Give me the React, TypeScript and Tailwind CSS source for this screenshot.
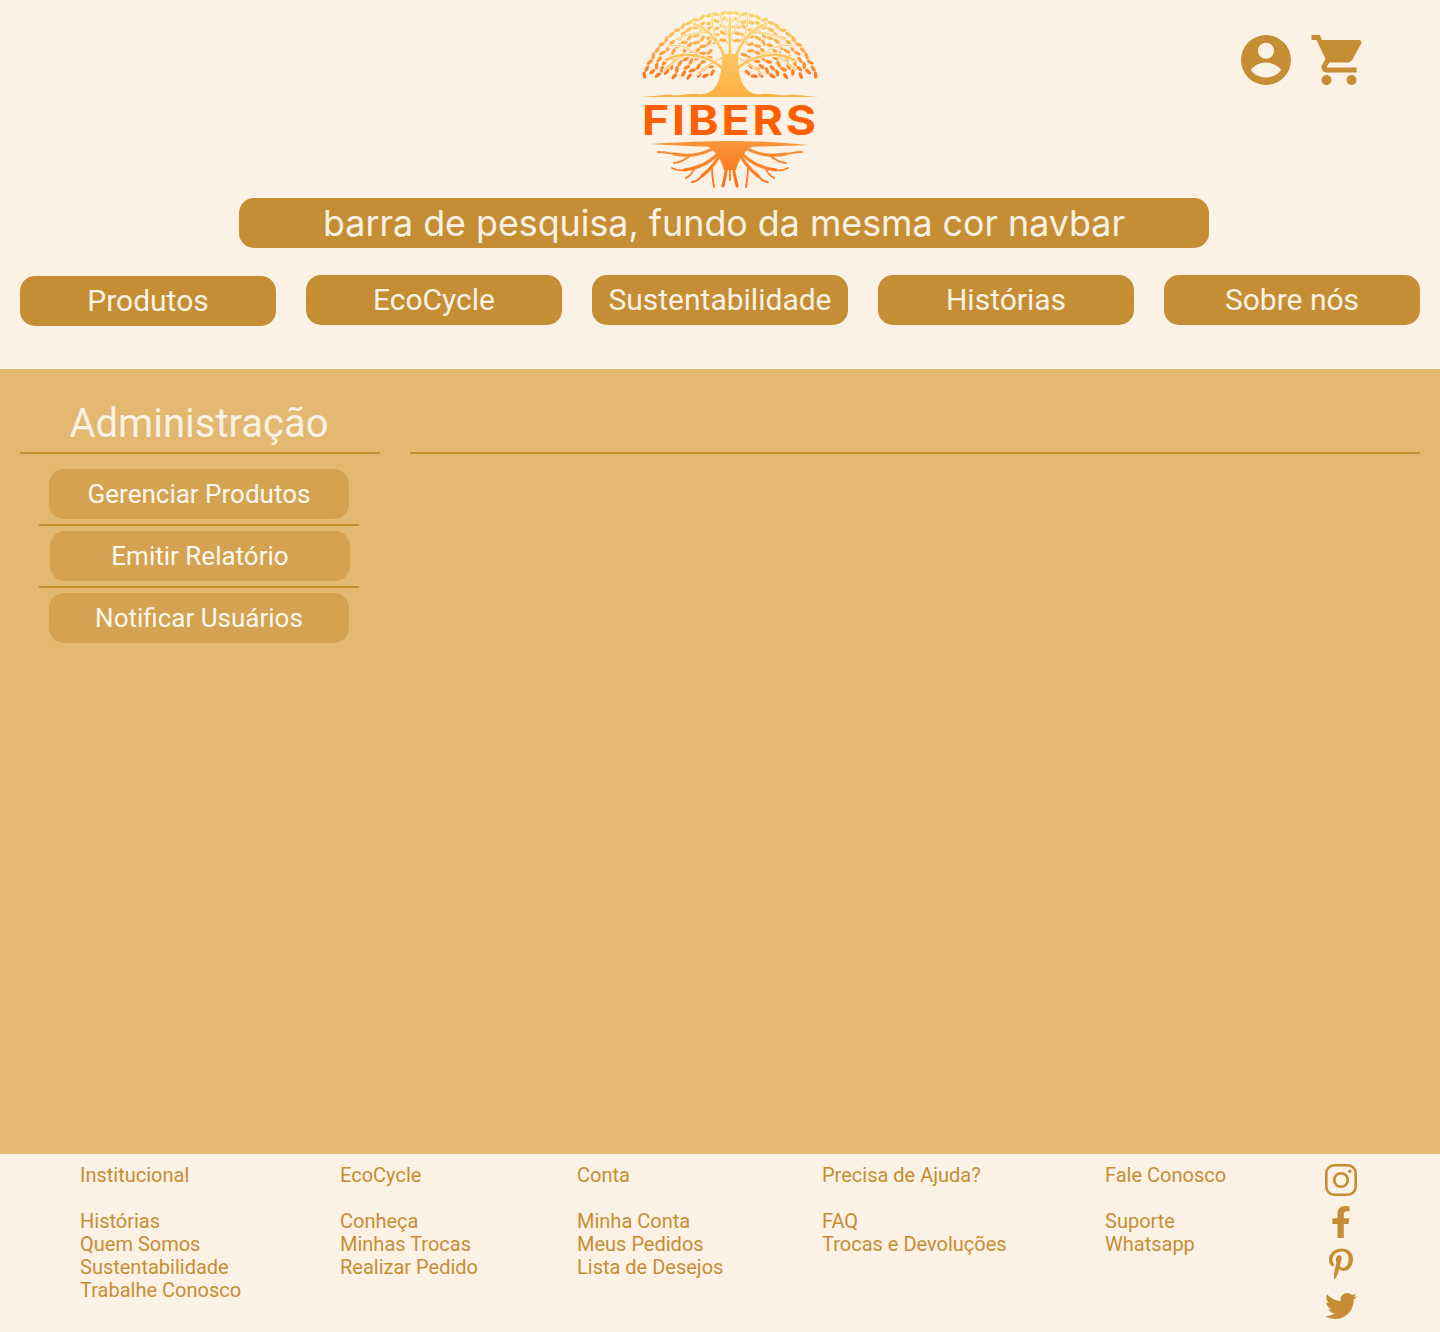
import React from "react";
import { FaFacebookF, FaPinterestP, FaTwitter } from "react-icons/fa";

const leaves: { x: number; y: number; a: number }[] = [];
const cx = 110, cy = 103;
let ringIndex = 0;
for (let r = 90; r >= 28; r -= 6.8) {
  const n = Math.floor((Math.PI * r) / 7);
  for (let i = 0; i <= n; i++) {
    const t = (Math.PI * (i + (ringIndex % 2) * 0.5)) / n;
    const jitter = ringIndex === 0 ? 0 : ((i * 13 + ringIndex * 7) % 5) - 2;
    const rr = r + jitter * 0.5;
    const x = cx + rr * Math.cos(t);
    const y = cy - rr * Math.sin(t);
    if (y > 78 || (Math.abs(x - 110) < 14 && y > 46)) continue;
    const tilt = ((i * 47 + ringIndex * 29) % 70) - 35;
    const a = (-t * 180) / Math.PI + 90 + tilt;
    leaves.push({ x, y, a });
  }
  ringIndex++;
}

const thickBranches = [
  "M108 66C104 52 98 42 90 34C85 29 80 26 74 24",
  "M112 66C116 52 122 42 130 34C135 29 140 26 146 24",
  "M104 70C96 62 84 56 70 55C62 54 54 56 46 60",
  "M116 70C124 62 136 56 150 55C158 54 166 56 174 60",
  "M110 62C110 48 109 34 110 18",
];
const thinBranches = [
  "M98 44C94 34 92 26 92 16",
  "M122 44C126 34 128 26 128 16",
  "M88 33C78 32 66 34 56 40",
  "M132 33C142 32 154 34 164 40",
  "M78 55C70 48 60 44 48 46",
  "M142 55C150 48 160 44 172 46",
  "M64 55C56 60 50 64 44 70",
  "M156 55C164 60 170 64 176 70",
  "M102 58C92 62 84 68 78 74",
  "M118 58C128 62 136 68 142 74",
  "M110 36C104 30 102 24 100 14",
  "M110 36C116 30 118 24 120 14",
];
const thickRoots = [
  "M104 148C98 160 92 168 82 176",
  "M116 148C122 160 128 168 138 176",
  "M96 147C84 154 72 157 54 154",
  "M124 147C136 154 148 157 166 154",
  "M101 150C92 162 80 168 64 170",
  "M119 150C128 162 140 168 156 170",
  "M108 150C108 164 106 174 103 186",
  "M112 150C112 164 114 174 117 186",
];
const thinRoots = [
  "M54 154C48 153 44 152 38 152",
  "M166 154C172 153 176 152 182 152",
  "M70 156C64 160 60 163 54 163",
  "M150 156C156 160 160 163 166 163",
  "M82 176C78 180 76 182 72 182",
  "M138 176C142 180 144 182 148 182",
  "M92 168C92 176 93 181 94 187",
  "M128 168C128 176 127 181 126 187",
  "M74 169C72 174 70 176 66 178",
  "M146 169C148 174 150 176 154 178",
  "M64 170C60 171 56 170 52 168",
  "M156 170C160 171 164 170 168 168",
  "M110 156C110 166 110 172 110 180",
];

function Logo() {
  return (
    <svg width="220" height="195" viewBox="0 0 220 195" className="block shrink-0">
      <defs>
        <linearGradient id="lf" x1="0" y1="12" x2="0" y2="78" gradientUnits="userSpaceOnUse">
          <stop offset="0" stopColor="#FBD768" />
          <stop offset="0.5" stopColor="#FBAE4C" />
          <stop offset="1" stopColor="#FF741C" />
        </linearGradient>
        <linearGradient id="tr" x1="0" y1="16" x2="0" y2="96" gradientUnits="userSpaceOnUse">
          <stop offset="0" stopColor="#FBDA78" />
          <stop offset="1" stopColor="#FDB044" />
        </linearGradient>
        <linearGradient id="rt" x1="0" y1="142" x2="0" y2="188" gradientUnits="userSpaceOnUse">
          <stop offset="0" stopColor="#F8963A" />
          <stop offset="1" stopColor="#FF6A12" />
        </linearGradient>
      </defs>
      {leaves.map((l, i) => (
        <ellipse key={i} cx={l.x} cy={l.y} rx="3.600" ry="1.700" fill="url(#lf)" transform={`rotate(${l.a} ${l.x} ${l.y})`} />
      ))}
      <g fill="none" stroke="#FBF1E4" strokeLinecap="round">
        {thickBranches.map((d, i) => <path key={i} d={d} strokeWidth="4.400" />)}
        {thinBranches.map((d, i) => <path key={i} d={d} strokeWidth="2.800" />)}
      </g>
      <g fill="none" stroke="url(#tr)" strokeLinecap="round">
        {thickBranches.map((d, i) => <path key={i} d={d} strokeWidth="2.600" />)}
        {thinBranches.map((d, i) => <path key={i} d={d} strokeWidth="1.100" />)}
      </g>
      <path d="M19 97C40 96 44 94 52 95C62 96 68 93 78 94C86 95 92 92 96 86C100 80 102 70 102 54L118 54C118 70 120 80 124 86C128 92 134 95 142 94C152 93 158 96 168 95C176 94 180 96 201 97Z" fill="url(#tr)" />
      <text x="22" y="135" textLength="177" lengthAdjust="spacingAndGlyphs" letterSpacing="2.500" fontFamily="Inter, sans-serif" fontWeight="700" fontSize="41" fill="#FF5F00">FIBERS</text>
      <path d="M30 144C60 142 90 141 110 141C130 141 160 142 189 145C160 146 130 147 110 147C90 147 60 146 30 144Z" fill="url(#rt)" />
      <path d="M86 145L134 145C126 150 120 156 116 170L104 170C100 156 94 150 86 145Z" fill="url(#rt)" />
      <g fill="none" stroke="url(#rt)" strokeLinecap="round">
        {thickRoots.map((d, i) => <path key={i} d={d} strokeWidth="3" />)}
        {thinRoots.map((d, i) => <path key={i} d={d} strokeWidth="1.800" />)}
      </g>
    </svg>
  );
}

function NavButton({ label, className = "" }: { label: string; className?: string }) {
  return (
    <button className={`w-[256px] h-[50px] rounded-[15px] bg-[#C68E34] text-[#FBF1E4] text-[30px] leading-[50px] text-center font-['Roboto',sans-serif] ${className}`}>
      {label}
    </button>
  );
}

function SideButton({ label, className = "" }: { label: string; className?: string }) {
  return (
    <button className={`block w-[300px] h-[50px] rounded-[15px] bg-[#D4A250] text-[#FFF8EE] text-[26px] leading-[50px] text-center font-['Roboto',sans-serif] ${className}`}>
      {label}
    </button>
  );
}

function FooterColumn({ title, items, className }: { title: string; items: string[]; className: string }) {
  return (
    <div className={`shrink-0 ${className}`}>
      <p>{title}</p>
      <p className="mt-[23px]">{items[0]}</p>
      {items.slice(1).map((t) => <p key={t}>{t}</p>)}
    </div>
  );
}

export default function App() {
  return (
    <div className="w-[1440px] h-[1332px] flex flex-col bg-[#FBF1E4] font-['Roboto',sans-serif] overflow-hidden">
      <header className="h-[369px] shrink-0">
        <div className="flex items-start">
          <div className="ml-[620px]"><Logo /></div>
          <svg width="60" height="60" viewBox="0 0 24 24" fill="#C68E34" fillRule="evenodd" className="ml-[396px] mt-[30px] shrink-0">
            <path d="M12 2a10 10 0 1 0 0 20a10 10 0 0 0 0-20ZM12 5.100a3.200 3.200 0 1 1 0 6.400a3.200 3.200 0 0 1 0-6.400ZM12 13c3 0 5 1.500 6 3c-1 1.500-3 3-6 3s-5-1.500-6-3c1-1.500 3-3 6-3Z" />
          </svg>
          <svg width="60" height="60" viewBox="0 0 24 24" fill="#C68E34" className="ml-[13px] mt-[30px] shrink-0">
            <path d="M7 18c-1.100 0-1.990.9-1.990 2S5.900 22 7 22s2-.9 2-2-.9-2-2-2zM1 2v2h2l3.600 7.590-1.350 2.450c-.16.28-.25.61-.25.96 0 1.100.9 2 2 2h12v-2H7.420c-.14 0-.25-.11-.25-.25l.03-.15.9-1.630h7.450c.75 0 1.410-.41 1.750-1.030l3.580-6.490c.08-.14.12-.31.12-.48 0-.55-.45-1-1-1H5.210l-.94-2H1zm16 16c-1.100 0-1.990.9-1.990 2s.89 2 1.990 2 2-.9 2-2-.9-2-2-2z" />
          </svg>
        </div>
        <div className="ml-[239px] mt-[3px] w-[970px] h-[50px] rounded-[15px] bg-[#C68E34] text-[#FBF1E4] text-[35.8px] leading-[50px] text-center font-['Inter',sans-serif]">
          barra de pesquisa, fundo da mesma cor navbar
        </div>
        <nav className="mt-[27px] px-[20px] flex items-start gap-[30px]">
          <NavButton label="Produtos" className="mt-px" />
          <NavButton label="EcoCycle" />
          <NavButton label="Sustentabilidade" />
          <NavButton label="Histórias" />
          <NavButton label="Sobre nós" />
        </nav>
      </header>
      <main className="h-[785px] shrink-0 bg-[#E3B871] px-[20px] flex gap-[30px] items-start">
        <section className="w-[360px] shrink-0">
          <h1 className="h-[85px] border-b-2 border-[#C68E34] text-center text-[40px] leading-[47px] pt-[31px] pr-[2px] text-[#FBF1E4]">Administração</h1>
          <div className="pl-[19px] w-[339px]">
            <SideButton label="Gerenciar Produtos" className="mt-[15px] ml-[10px]" />
            <div className="mt-[5px] h-[2px] w-[320px] bg-[#C68E34]" />
            <SideButton label="Emitir Relatório" className="mt-[5px] ml-[11px]" />
            <div className="mt-[5px] h-[2px] w-[320px] bg-[#C68E34]" />
            <SideButton label="Notificar Usuários" className="mt-[5px] ml-[10px]" />
          </div>
        </section>
        <div className="flex-1 mt-[83px] h-[2px] bg-[#C68E34]" />
      </main>
      <footer className="flex-1 flex pl-[80px] pt-[10px] text-[20px] leading-[23px] text-[#C68E34]">
        <FooterColumn className="w-[260px]" title="Institucional" items={["Histórias", "Quem Somos", "Sustentabilidade", "Trabalhe Conosco"]} />
        <FooterColumn className="w-[237px]" title="EcoCycle" items={["Conheça", "Minhas Trocas", "Realizar Pedido"]} />
        <FooterColumn className="w-[245px]" title="Conta" items={["Minha Conta", "Meus Pedidos", "Lista de Desejos"]} />
        <FooterColumn className="w-[283px]" title="Precisa de Ajuda?" items={["FAQ", "Trocas e Devoluções"]} />
        <FooterColumn className="w-[220px]" title="Fale Conosco" items={["Suporte", "Whatsapp"]} />
        <div className="w-[32px] flex flex-col items-center gap-[10px]">
          <svg width="32" height="32" viewBox="0 0 32 32" fill="none" stroke="#C68E34" strokeWidth="2.600" className="shrink-0">
            <rect x="1.300" y="1.300" width="29.400" height="29.400" rx="8" />
            <circle cx="16" cy="16" r="6.800" />
            <circle cx="24.800" cy="7.200" r="1.800" fill="#C68E34" stroke="none" />
          </svg>
          <FaFacebookF size={32} className="shrink-0" />
          <FaPinterestP size={32} className="shrink-0" />
          <FaTwitter size={32} className="shrink-0" />
        </div>
      </footer>
    </div>
  );
}
